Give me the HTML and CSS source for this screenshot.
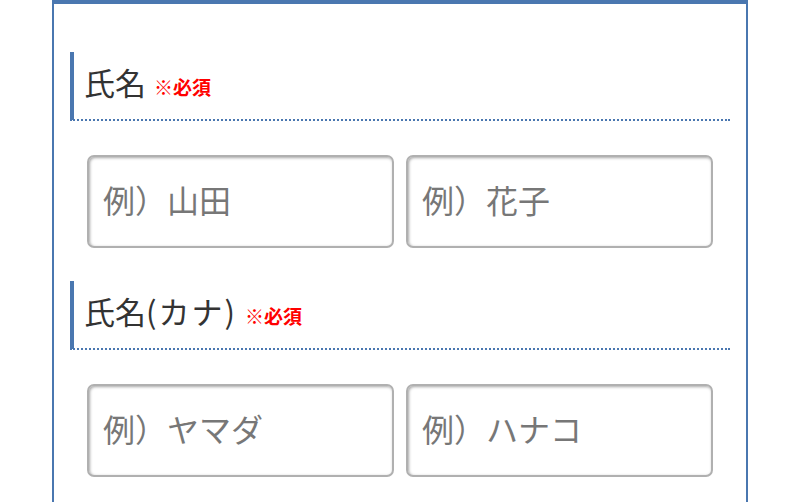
FILE: index.html
```html
<!DOCTYPE html>
<html lang="ja">
<head>
<meta charset="utf-8">
<link rel="stylesheet" href="styles.css">
</head>
<body>
<div class="form-box">
  <h2 class="label">氏名<span class="req">※必須</span></h2>
  <div class="row">
    <input class="field" type="text" placeholder="例）山田">
    <input class="field" type="text" placeholder="例）花子">
  </div>
  <h2 class="label">氏名<span class="wide">(カナ)</span><span class="req">※必須</span></h2>
  <div class="row">
    <input class="field" type="text" placeholder="例）ヤマダ">
    <input class="field" type="text" placeholder="例）ハナコ">
  </div>
</div>
</body>
</html>
```
FILE: styles.css
```css
html, body {
  margin: 0;
  padding: 0;
  background: #fff;
  height: 100%;
  overflow: hidden;
}
body {
  font-family: "Noto Sans CJK JP", "Noto Sans", sans-serif;
  color: #333;
}
.form-box {
  box-sizing: border-box;
  margin-left: 52px;
  width: 696px;
  min-height: 502px;
  border: 2px solid #4a77b0;
  border-top-width: 4px;
  border-bottom: none;
  padding: 48px 16px 0;
}
.label {
  margin: 0;
  box-sizing: border-box;
  height: 69px;
  border-left: 4px solid #4a77b0;
  border-bottom: 2px dotted #4a77b0;
  padding: 8px 0 0 10px;
  font-size: 31px;
  font-weight: normal;
  line-height: 44px;
  color: #333;
  white-space: nowrap;
}
.wide {
  letter-spacing: 2px;
}
.req {
  color: #f00;
  font-weight: bold;
  font-size: 19px;
  margin-left: 8px;
  letter-spacing: 0;
}
.row {
  display: flex;
  gap: 12px;
  padding: 0 17px;
  margin: 34px 0 33px;
}
.field {
  flex: 1;
  min-width: 0;
  box-sizing: border-box;
  height: 93px;
  border: 2px solid #b0b0b0;
  border-radius: 7px;
  box-shadow: inset 1px 1px 3px rgba(0,0,0,0.35);
  padding: 0 14px 5px;
  font-family: "Noto Sans CJK JP", "Noto Sans", sans-serif;
  font-size: 32px;
  color: #333;
  background: #fff;
  outline: none;
}
.field::placeholder {
  color: #777;
  opacity: 1;
}
```
